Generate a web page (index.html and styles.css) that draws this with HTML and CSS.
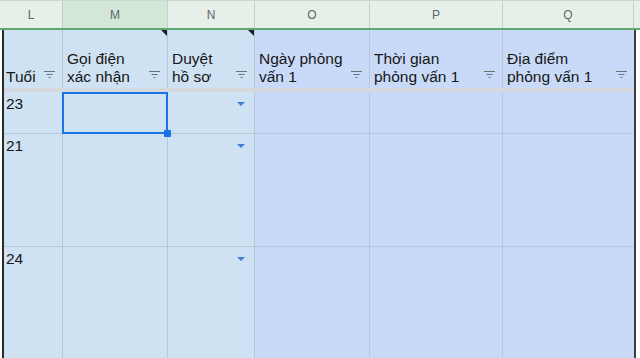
FILE: index.html
```html
<!DOCTYPE html>
<html lang="vi">
<head>
    <meta charset="UTF-8">
    <meta name="viewport" content="width=device-width, initial-scale=1.0">
    <title>Bảng phỏng vấn</title>
    <link rel="stylesheet" href="styles.css">
</head>
<body>
    <div class="sheet">
        <div class="colheads">
            <div class="ch w-l">L</div>
            <div class="ch w-m picked">M</div>
            <div class="ch w-n">N</div>
            <div class="ch w-o">O</div>
            <div class="ch w-p">P</div>
            <div class="ch w-q">Q</div>
            <div class="ch-rest"></div>
        </div>

        <div class="frame">
            <!-- header row -->
            <div class="row head-row">
                <div class="cell head w-l a">
                    <span class="label">Tuổi</span>
                    <svg class="filter" width="11" height="7" viewBox="0 0 11 7"><path d="M0 .5h11M2.5 3.5h6M4.5 6.5h2" stroke="#6b7075" stroke-width="1"/></svg>
                </div>
                <div class="cell head w-m a">
                    <span class="label">Gọi điện<br>xác nhận</span>
                    <svg class="filter" width="11" height="7" viewBox="0 0 11 7"><path d="M0 .5h11M2.5 3.5h6M4.5 6.5h2" stroke="#6b7075" stroke-width="1"/></svg>
                    <span class="note"></span>
                </div>
                <div class="cell head w-n a">
                    <span class="label">Duyệt<br>hồ sơ</span>
                    <svg class="filter" width="11" height="7" viewBox="0 0 11 7"><path d="M0 .5h11M2.5 3.5h6M4.5 6.5h2" stroke="#6b7075" stroke-width="1"/></svg>
                    <span class="note"></span>
                </div>
                <div class="cell head w-o b">
                    <span class="label">Ngày phỏng<br>vấn 1</span>
                    <svg class="filter" width="11" height="7" viewBox="0 0 11 7"><path d="M0 .5h11M2.5 3.5h6M4.5 6.5h2" stroke="#6b7075" stroke-width="1"/></svg>
                </div>
                <div class="cell head w-p b">
                    <span class="label">Thời gian<br>phỏng vấn 1</span>
                    <svg class="filter" width="11" height="7" viewBox="0 0 11 7"><path d="M0 .5h11M2.5 3.5h6M4.5 6.5h2" stroke="#6b7075" stroke-width="1"/></svg>
                </div>
                <div class="cell head w-q b">
                    <span class="label">Địa điểm<br>phỏng vấn 1</span>
                    <svg class="filter" width="11" height="7" viewBox="0 0 11 7"><path d="M0 .5h11M2.5 3.5h6M4.5 6.5h2" stroke="#6b7075" stroke-width="1"/></svg>
                </div>
            </div>

            <div class="freeze"></div>

            <div class="row r-short">
                <div class="cell w-l a num">23</div>
                <div class="cell w-m a"><div class="select"><span class="handle"></span></div></div>
                <div class="cell w-n a"><svg class="drop" width="8" height="4" viewBox="0 0 8 4"><path d="M0 0h8L4 4z" fill="#3d7fd1"/></svg></div>
                <div class="cell w-o b"></div>
                <div class="cell w-p b"></div>
                <div class="cell w-q b"></div>
            </div>

            <div class="row r-tall">
                <div class="cell w-l a num">21</div>
                <div class="cell w-m a"></div>
                <div class="cell w-n a"><svg class="drop" width="8" height="4" viewBox="0 0 8 4"><path d="M0 0h8L4 4z" fill="#3d7fd1"/></svg></div>
                <div class="cell w-o b"></div>
                <div class="cell w-p b"></div>
                <div class="cell w-q b"></div>
            </div>

            <div class="row r-last">
                <div class="cell w-l a num">24</div>
                <div class="cell w-m a"></div>
                <div class="cell w-n a"><svg class="drop" width="8" height="4" viewBox="0 0 8 4"><path d="M0 0h8L4 4z" fill="#3d7fd1"/></svg></div>
                <div class="cell w-o b"></div>
                <div class="cell w-p b"></div>
                <div class="cell w-q b"></div>
            </div>
        </div>
    </div>
</body>
</html>
```

FILE: styles.css
```css
* {
    box-sizing: border-box;
}
body {
    margin: 0;
    background: #fff;
    font-family: 'Liberation Sans', Arial, sans-serif;
    color: #161616;
}
.sheet {
    width: 640px;
    height: 358px;
    overflow: hidden;
    display: flex;
    flex-direction: column;
}

/* column letters */
.colheads {
    display: flex;
    height: 30px;
    flex: none;
    background: #e6f0e8;
    border-top: 1px solid #d0d6d2;
    border-bottom: 2px solid #5fa871;
}
.ch {
    display: flex;
    align-items: center;
    justify-content: center;
    font-size: 12px;
    color: #5f6368;
    border-right: 1px solid #c7cfc9;
}
.ch.picked {
    background: #d3e7d7;
}
.ch.w-l { width: 63px; }
.ch-rest {
    flex: 1;
}

/* grid body */
.frame {
    flex: 1;
    width: 634px;
    margin-left: 2px;
    border-left: 2px solid #2b2b2b;
    border-right: 2px solid #3a3f3b;
    display: flex;
    flex-direction: column;
}
.row {
    display: flex;
    border-bottom: 1px solid #b6c7da;
}
.head-row {
    height: 58px;
    border-bottom: none;
}
.freeze {
    height: 4px;
    background: #d5d9dd;
}
.r-short { height: 42px; }
.r-tall { height: 113px; }
.r-last {
    flex: 1;
    border-bottom: none;
}

.cell {
    position: relative;
    border-right: 1px solid #b6c7da;
    font-size: 15.5px;
    line-height: 18px;
}
.cell:last-child {
    border-right: none;
}
.a { background: #cfe2f3; }
.b { background: #c9daf8; }

.w-l { width: 59px; }
.w-m { width: 105px; }
.w-n { width: 87px; }
.w-o { width: 115px; }
.w-p { width: 133px; }
.w-q { width: 131px; }
.ch.w-q { width: 131px; }

.head {
    display: flex;
    align-items: flex-end;
    justify-content: space-between;
    padding: 0 7px 2px 4px;
}
.head.w-l {
    padding-left: 2px;
}
.filter {
    flex: none;
    margin-bottom: 8px;
}
.note {
    position: absolute;
    top: 0;
    right: 0;
    width: 0;
    height: 0;
    border-top: 6px solid #1f1f1f;
    border-left: 6px solid transparent;
}

.num {
    padding: 3px 0 0 2px;
}
.drop {
    position: absolute;
    top: 10px;
    right: 9px;
}

/* selected cell */
.select {
    position: absolute;
    top: 0;
    left: -1px;
    right: -1px;
    bottom: -1px;
    border: 2px solid #1a73e8;
    z-index: 2;
}
.handle {
    position: absolute;
    right: -5px;
    bottom: -5px;
    width: 7px;
    height: 7px;
    background: #1a73e8;
}
```
